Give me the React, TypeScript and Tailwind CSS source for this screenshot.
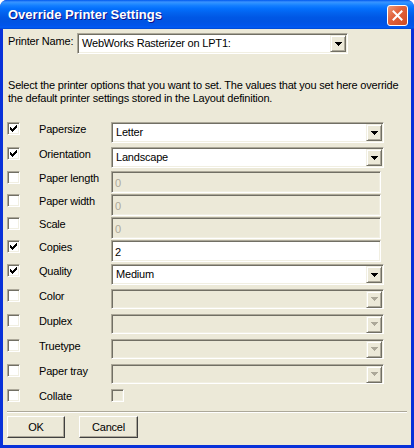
import React from "react";

const sunken =
  "border border-t-[#ACA899] border-l-[#ACA899] border-r-white border-b-white shadow-[inset_1px_1px_0_#716F64,inset_-1px_-1px_0_#F1EFE2]";
const raised =
  "border border-t-[#F1EFE2] border-l-[#F1EFE2] border-r-[#716F64] border-b-[#716F64] shadow-[inset_1px_1px_0_#ffffff,inset_-1px_-1px_0_#ACA899]";

function Tick() {
  return (
    <svg width="7" height="7" viewBox="0 0 7 7" shapeRendering="crispEdges">
      <path
        d="M0 2h1v3h-1z M1 3h1v3h-1z M2 4h1v3h-1z M3 3h1v3h-1z M4 2h1v3h-1z M5 1h1v3h-1z M6 0h1v3h-1z"
        fill="#000"
      />
    </svg>
  );
}

function Checkbox({ checked, disabled }: { checked?: boolean; disabled?: boolean }) {
  return (
    <div
      className={`flex h-[13px] w-[13px] shrink-0 items-center justify-center ${sunken} ${
        disabled ? "bg-[#ECE9D8]" : "bg-white"
      }`}
    >
      {checked && <Tick />}
    </div>
  );
}

function Arrow({ disabled }: { disabled?: boolean }) {
  return (
    <div className={`flex h-[17px] w-[16px] shrink-0 items-center justify-center bg-[#ECE9D8] ${raised}`}>
      <svg width="7" height="4" viewBox="0 0 7 4" shapeRendering="crispEdges">
        <path d="M0 0h7v1h-7z M1 1h5v1h-5z M2 2h3v1h-3z M3 3h1v1h-1z" fill={disabled ? "#ACA899" : "#000"} />
      </svg>
    </div>
  );
}

function Combo({ value, disabled, w = "w-[273px]", h = "h-[21px]" }: { value?: string; disabled?: boolean; w?: string; h?: string }) {
  return (
    <div
      className={`flex ${h} ${w} shrink-0 items-center ${sunken} ${disabled ? "bg-[#ECE9D8]" : "bg-white"} pl-[4px] pr-[1px]`}
    >
      <span className="flex-1 whitespace-nowrap leading-[13px] text-black">{value}</span>
      <Arrow disabled={disabled} />
    </div>
  );
}

function TextBox({ value, disabled }: { value: string; disabled?: boolean }) {
  return (
    <div
      className={`flex h-[22px] w-[270px] shrink-0 items-center ${sunken} ${disabled ? "bg-[#ECE9D8] text-[#ACA899]" : "bg-white text-black"} pl-[3px] pt-[2px]`}
    >
      <span className="leading-[13px]">{value}</span>
    </div>
  );
}

type Row = {
  label: string;
  checked: boolean;
  h: string;
  control: React.ReactNode;
};

const rows: Row[] = [
  { label: "Papersize", checked: true, h: "h-[25px]", control: <Combo value="Letter" /> },
  { label: "Orientation", checked: true, h: "h-[24px]", control: <Combo value="Landscape" /> },
  { label: "Paper length", checked: false, h: "h-[23px]", control: <TextBox value="0" disabled /> },
  { label: "Paper width", checked: false, h: "h-[23px]", control: <TextBox value="0" disabled /> },
  { label: "Scale", checked: false, h: "h-[23px]", control: <TextBox value="0" disabled /> },
  { label: "Copies", checked: true, h: "h-[24px]", control: <TextBox value="2" /> },
  { label: "Quality", checked: true, h: "h-[25px]", control: <Combo value="Medium" /> },
  { label: "Color", checked: false, h: "h-[25px]", control: <Combo disabled h="h-[20px]" /> },
  { label: "Duplex", checked: false, h: "h-[25px]", control: <Combo disabled h="h-[20px]" /> },
  { label: "Truetype", checked: false, h: "h-[25px]", control: <Combo disabled h="h-[20px]" /> },
  { label: "Paper tray", checked: false, h: "h-[25px]", control: <Combo disabled h="h-[20px]" /> },
  { label: "Collate", checked: false, h: "h-[22px]", control: <Checkbox disabled /> },
];

function Button({ label, w }: { label: string; w: string }) {
  return (
    <div
      className={`flex h-[22px] ${w} items-center justify-center bg-[#ECE9D8] border border-t-white border-l-white border-r-[#404040] border-b-[#404040] shadow-[inset_-1px_-1px_0_#ACA899]`}
    >
      <span className="leading-[13px]">{label}</span>
    </div>
  );
}

export default function App() {
  return (
    <div className="flex h-[448px] w-[414px] flex-col overflow-hidden rounded-t-[7px] bg-[#0831D9] font-['Liberation_Sans',Arial,sans-serif] text-[11px] text-black">
      {/* Title bar */}
      <div className="flex h-[29px] shrink-0 items-start bg-[linear-gradient(180deg,#0058EE_0%,#3A93FF_7%,#288EFF_12%,#127DFF_20%,#036FFC_30%,#0262EE_45%,#0057E5_60%,#0054E3_75%,#0055EB_88%,#005BF5_94%,#0046D0_100%)] pl-[8px] pr-[6px]">
        <span className="mt-[7px] flex-1 whitespace-nowrap text-[13px] font-bold leading-[16px] text-white [text-shadow:1px_1px_0_#0F1089]">
          Override Printer Settings
        </span>
        <div className="mt-[5px] flex h-[21px] w-[21px] items-center justify-center rounded-[3px] border border-white bg-[linear-gradient(135deg,#EC9A78_0%,#E2643E_40%,#CF4A22_100%)]">
          <svg width="11" height="11" viewBox="0 0 11 11">
            <path d="M1.5 1.5L9.5 9.5M9.5 1.5L1.5 9.5" stroke="#fff" strokeWidth="2" strokeLinecap="square" />
          </svg>
        </div>
      </div>

      {/* Body */}
      <div className="mx-[3px] mb-[3px] flex flex-1 flex-col bg-[#ECE9D8] tracking-[-0.2px]">
        <div className="mt-[4px] flex items-start pl-[5px]">
          <span className="w-[69px] pt-[2px] leading-[13px]">Printer Name:</span>
          <Combo value="WebWorks Rasterizer on LPT1:" w="w-[271px]" h="h-[21px]" />
        </div>

        <p className="mt-[25px] whitespace-nowrap pl-[5px] leading-[13px]">
          Select the printer options that you want to set. The values that you set here override
          <br />
          the default printer settings stored in the Layout definition.
        </p>

        <div className="mt-[17px] flex flex-col">
          {rows.map((r) => (
            <div key={r.label} className={`flex items-start ${r.h} pl-[4px]`}>
              <Checkbox checked={r.checked} />
              <span className="ml-[19px] w-[72px] shrink-0 whitespace-nowrap pt-[1px] leading-[13px]">{r.label}</span>
              {r.control}
            </div>
          ))}
        </div>

        <div className="ml-[4px] w-[400px] border-t border-b border-t-[#ACA899] border-b-white" />

        <div className="ml-[4px] mt-[3px] flex gap-[14px]">
          <Button label="OK" w="w-[58px]" />
          <Button label="Cancel" w="w-[59px]" />
        </div>
      </div>
    </div>
  );
}
